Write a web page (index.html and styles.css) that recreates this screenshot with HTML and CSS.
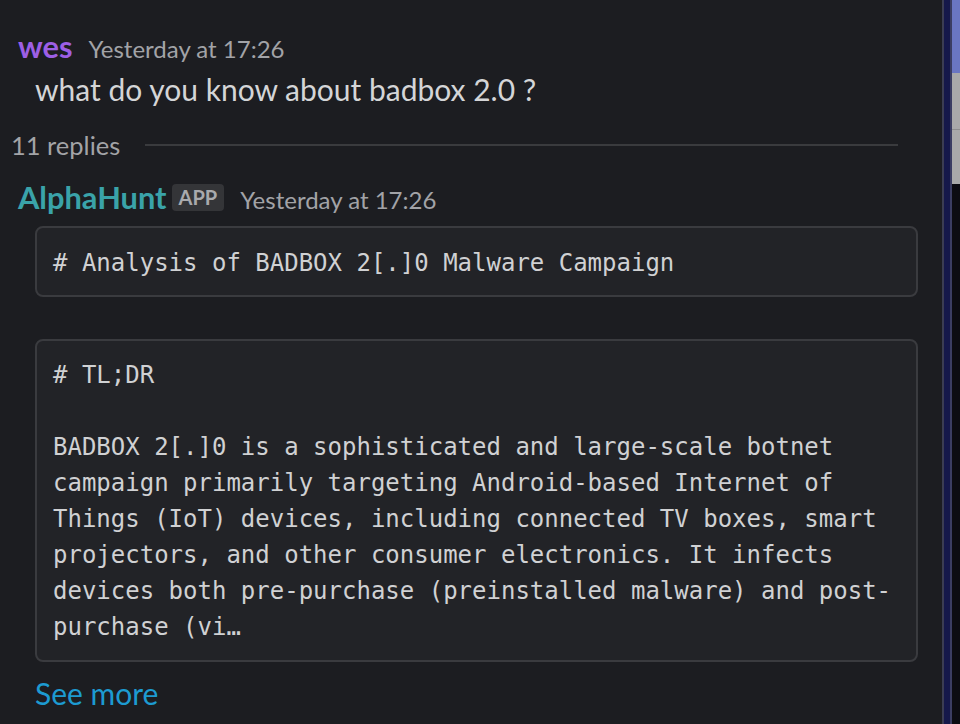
FILE: index.html
```html
<!DOCTYPE html>
<html>
<head>
<meta charset="utf-8">
<link rel="stylesheet" href="styles.css">
</head>
<body>
<div class="app">
  <main class="thread">
    <div class="msg msg-first">
      <div class="head">
        <span class="name name-wes">wes</span>
        <span class="time">Yesterday at 17:26</span>
      </div>
      <div class="text">what do you know about badbox 2.0 ?</div>
    </div>
    <div class="replies">
      <span class="replies-label">11 replies</span>
      <span class="replies-rule"></span>
    </div>
    <div class="msg msg-bot">
      <div class="head">
        <span class="name name-bot">AlphaHunt</span>
        <span class="badge">APP</span>
        <span class="time">Yesterday at 17:26</span>
      </div>
      <div class="body">
        <pre class="code code-title"># Analysis of BADBOX 2[.]0 Malware Campaign</pre>
        <pre class="code code-main"># TL;DR

BADBOX 2[.]0 is a sophisticated and large-scale botnet
campaign primarily targeting Android-based Internet of
Things (IoT) devices, including connected TV boxes, smart
projectors, and other consumer electronics. It infects
devices both pre-purchase (preinstalled malware) and post-
purchase (vi…</pre>
        <a class="see-more" href="#">See more</a>
      </div>
    </div>
  </main>
  <aside class="scroll">
    <div class="scroll-edge"></div>
    <div class="scroll-track"></div>
    <div class="scroll-edge2"></div>
    <div class="scroll-side">
      <div class="side-blue"></div>
      <div class="side-grey"></div>
      <div class="side-grey side-grey2"></div>
      <div class="side-dark"></div>
    </div>
  </aside>
</div>
</body>
</html>
```

FILE: styles.css
```css
* { box-sizing: border-box; }
html, body { margin: 0; padding: 0; height: 100%; }
body {
  background: #1c1d21;
  font-family: Lato, "Noto Sans", sans-serif;
  color: #d1d2d3;
  overflow: hidden;
}
.app {
  display: flex;
  height: 724px;
  width: 960px;
}
.thread {
  flex: 1;
  background: #1c1d21;
  padding-top: 27px;
}
.msg { padding-left: 18px; }
.head {
  display: flex;
  align-items: baseline;
  gap: 16px;
  height: 40px;
  line-height: 40px;
}
.name {
  font-weight: 700;
  font-size: 30.8px;
}
.name-wes { color: #9d5fe6; }
.name-bot { color: #3aa3a9; }
.time {
  font-size: 24px;
  color: #a2a3a7;
}
.text {
  padding-left: 17px;
  font-size: 30px;
  line-height: 44px;
  color: #d4d5d7;
}
.replies {
  display: flex;
  align-items: center;
  margin-top: 16px;
  padding: 0 44px 0 11px;
  height: 36px;
  gap: 25px;
}
.replies-label {
  font-size: 25.5px;
  color: #a3a4a7;
}
.replies-rule {
  flex: 1;
  height: 2px;
  background: #3a3b3e;
}
.msg-bot { margin-top: 15px; }
.badge {
  font-size: 20px;
  font-weight: 700;
  color: #a9aaad;
  background: #343538;
  border-radius: 4px;
  padding: 0 7px;
  margin-left: -8px;
  align-self: center;
  height: 27px;
  line-height: 27px;
  position: relative;
  top: -1px;
}
.body {
  padding: 8px 24px 0 17px;
}
.code {
  margin: 0;
  font-family: "DejaVu Sans Mono", "Liberation Mono", monospace;
  font-size: 24px;
  line-height: 36px;
  color: #d0d1d3;
  background: #222327;
  border: 2px solid #3a3b3f;
  border-radius: 8px;
  padding: 17px 16px 15px 16px;
  white-space: pre;
}
.code-title { margin-bottom: 42px; padding-bottom: 14px; }
.code-main { padding-top: 16px; }
.see-more {
  display: block;
  margin-top: 11px;
  font-size: 30px;
  line-height: 40px;
  color: #1d9bd1;
  text-decoration: none;
}
.scroll {
  display: flex;
  width: 18px;
  height: 100%;
}
.scroll-edge { width: 2px; background: #3b3d52; }
.scroll-track { width: 6px; background: #15184a; }
.scroll-edge2 { width: 2px; background: #3b3d62; }
.scroll-side {
  width: 8px;
  display: flex;
  flex-direction: column;
}
.side-blue { height: 73px; background: #6a76c2; }
.side-grey { height: 57px; background: #a9a9a9; border-bottom: 1px solid #8e8e8e; }
.side-grey2 { height: 54px; border-bottom: 0; }
.side-dark { flex: 1; background: #0c0c12; }
.name-bot + .badge { margin-left: -11px; }
```
